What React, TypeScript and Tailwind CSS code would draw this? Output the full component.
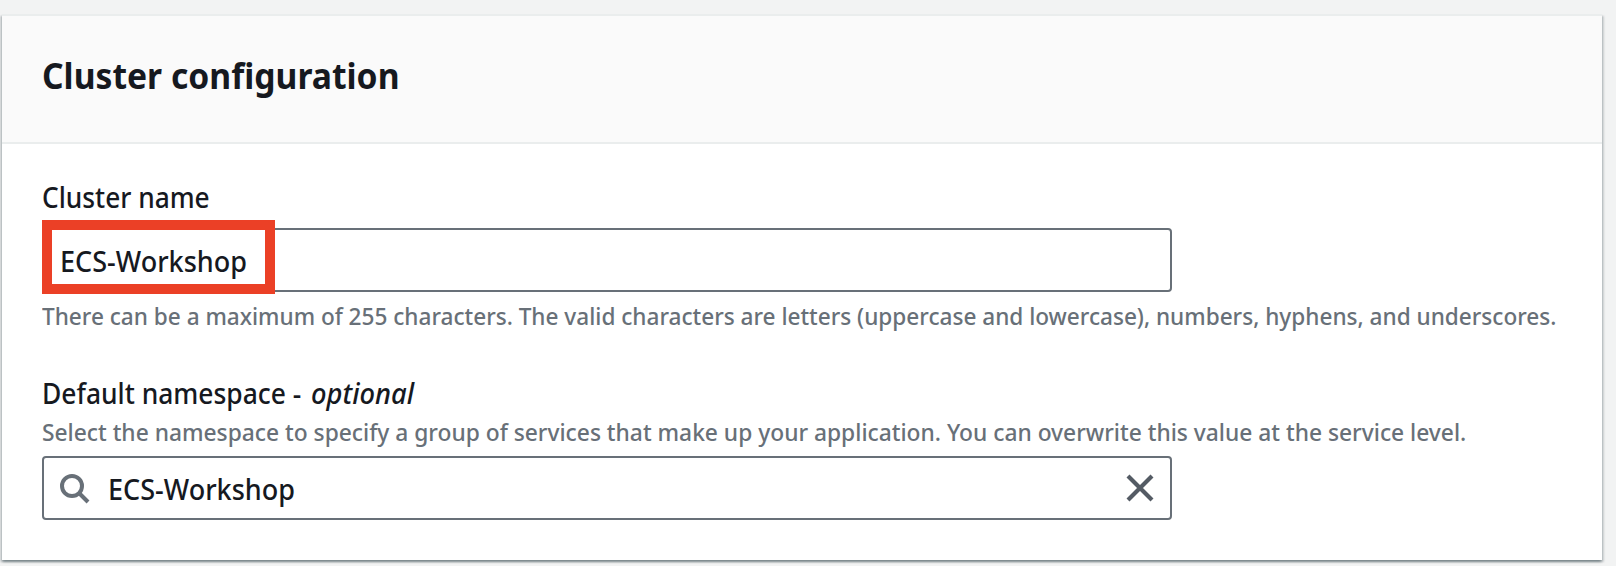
export default function App() {
  return (
    <div className="h-[566px] w-[1616px] overflow-hidden bg-[#f2f3f3] pt-3.5 pl-0.5 font-['Noto_Sans',sans-serif] font-medium text-[#16191f]">
      <section className="h-[546px] w-[1600px] border-t-2 border-[#eaeded] bg-white whitespace-nowrap shadow-[0_2px_2px_0_rgba(0,28,36,0.3),2px_2px_2px_0_rgba(0,28,36,0.15),-2px_2px_2px_0_rgba(0,28,36,0.15)]">
        <header className="h-32 border-b-2 border-[#eaeded] bg-[#fafafa] px-10 pt-[35px]">
          <h1 className="origin-left scale-x-[0.935] text-[36px] leading-[50px] font-bold">Cluster configuration</h1>
        </header>
        <div className="flex flex-col px-10 pt-[33px]">
          <label htmlFor="cluster-name" className="origin-left scale-x-[0.939] text-[28px] leading-10">Cluster name</label>
          <div className="relative mt-[11px] flex h-16 w-[1130px] items-center rounded-[4px] border-2 border-[#687078] bg-white pl-4">
            <span id="cluster-name" className="origin-left scale-x-[0.965] pt-px text-[28px] leading-10">ECS-Workshop</span>
            <div className="absolute -top-[10px] -left-0.5 h-[74px] w-[233px] border-[10px] border-[#eb4026]" />
          </div>
          <p className="mt-2 origin-left scale-x-[0.941] text-[24px] leading-8 text-[#687078]">
            There can be a maximum of 255 characters. The valid characters are letters (uppercase and lowercase), numbers, hyphens, and underscores.
          </p>
          <label htmlFor="namespace" className="mt-[41px] flex text-[28px] leading-10 whitespace-pre">
            <span className="w-[269px] origin-left scale-x-[0.943]">Default namespace - </span>
            <i className="origin-left scale-x-[0.975]">optional</i>
          </label>
          <p className="mt-[3px] origin-left scale-x-[0.949] text-[24px] leading-8 text-[#687078]">
            Select the namespace to specify a group of services that make up your application. You can overwrite this value at the service level.
          </p>
          <div className="mt-2 flex h-16 w-[1130px] items-center rounded-[4px] border-2 border-[#687078] bg-white pr-[14px] pl-[14px]">
            <svg className="h-8 w-8 shrink-0" viewBox="0 0 32 32" fill="none" stroke="#687078" strokeWidth="4">
              <circle cx="14" cy="14" r="10" />
              <path d="M21 21L30 30" />
            </svg>
            <span id="namespace" className="ml-[18px] flex-1 origin-left scale-x-[0.965] pt-px text-[28px] leading-10">ECS-Workshop</span>
            <svg className="h-8 w-8 shrink-0" viewBox="0 0 32 32" fill="none" stroke="#545b64" strokeWidth="4.2">
              <path d="M4 4L28 28M28 4L4 28" />
            </svg>
          </div>
        </div>
      </section>
    </div>
  );
}
